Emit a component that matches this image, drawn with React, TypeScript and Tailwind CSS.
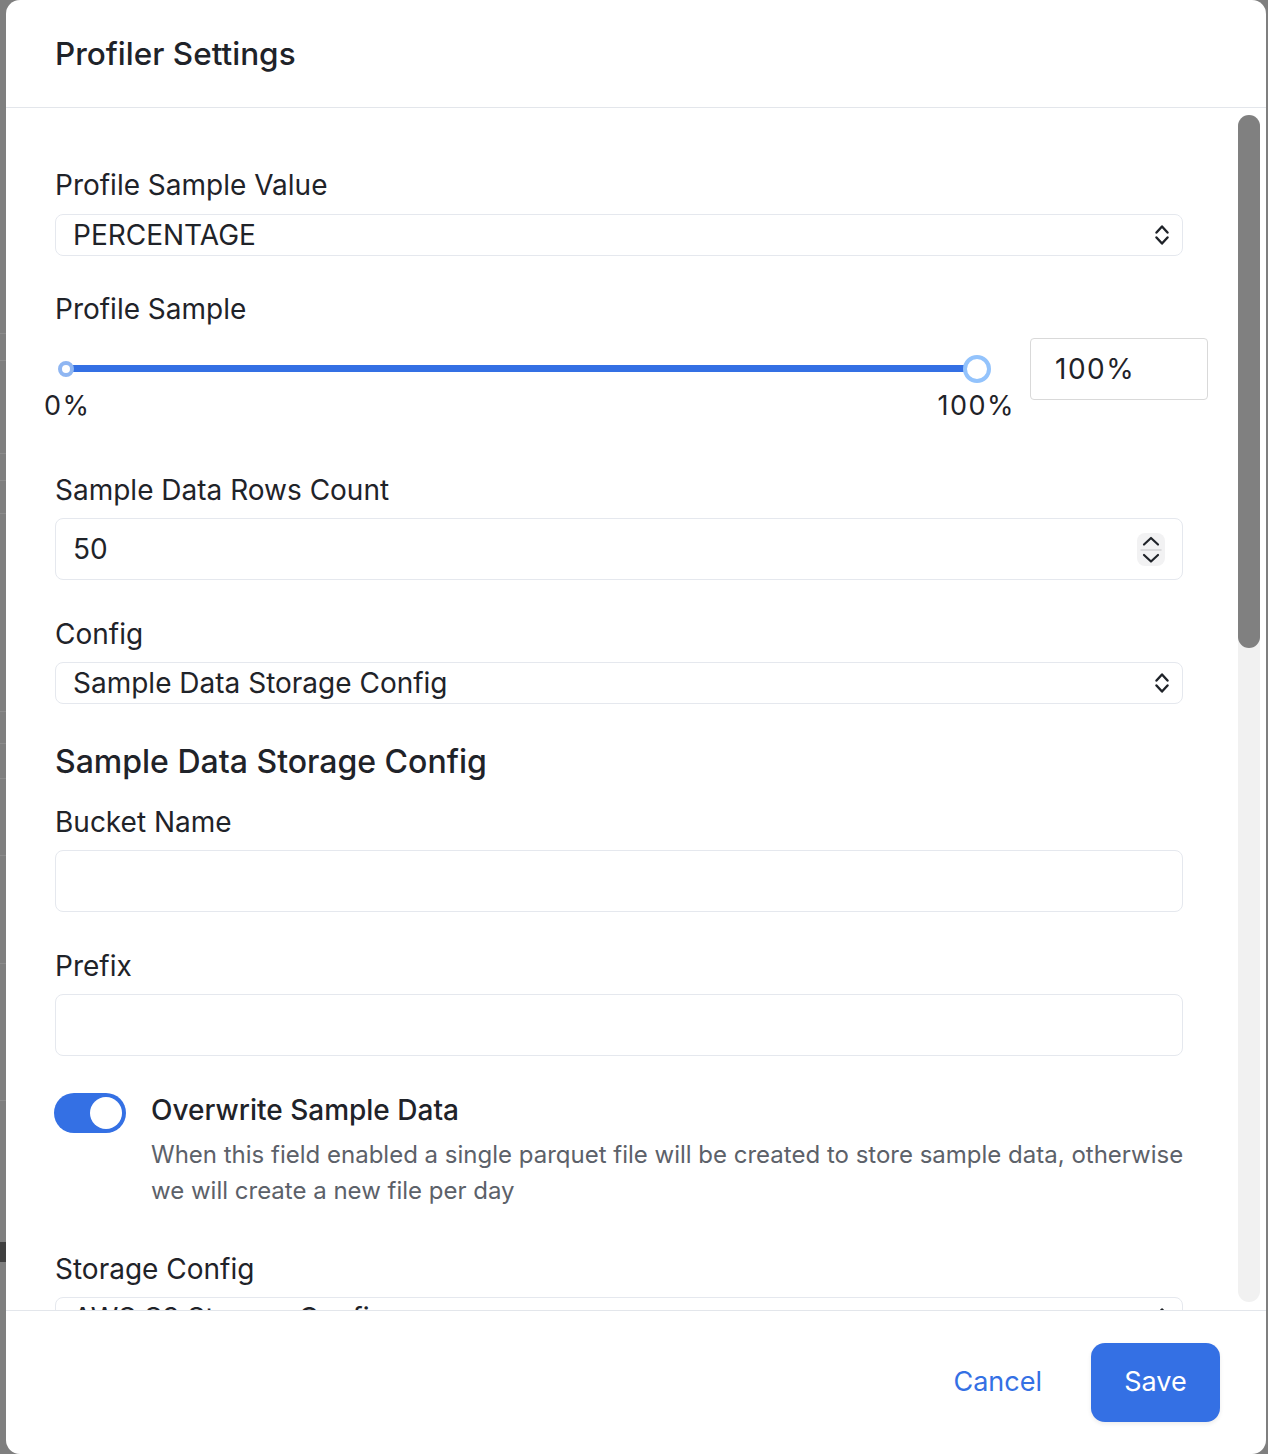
import React from "react";

const TEXT = "text-[#1f2329]";

function Chevrons() {
  return (
    <svg width="14" height="22" viewBox="0 0 14 22" fill="none" stroke="#1f2329" strokeWidth="2.4" strokeLinecap="round" strokeLinejoin="round">
      <polyline points="1.5,8.5 7,2.5 12.5,8.5" />
      <polyline points="1.5,13.5 7,19.5 12.5,13.5" />
    </svg>
  );
}

function Spinner() {
  return (
    <div className="w-[28px] h-[33px] rounded-[8px] bg-[#f2f2f3]">
      <svg width="28" height="33" viewBox="0 0 28 33" fill="none" strokeLinecap="round" strokeLinejoin="round">
        <polyline points="7,11.5 14,5 21,11.5" stroke="#1f2329" strokeWidth="2.2" />
        <line x1="4" y1="17" x2="24" y2="17" stroke="#d4d4d6" strokeWidth="1.5" />
        <polyline points="7,22 14,28.5 21,22" stroke="#1f2329" strokeWidth="2.2" />
      </svg>
    </div>
  );
}

function Label({ children, className = "" }: { children: React.ReactNode; className?: string }) {
  return <div className={`text-[28px] leading-[36px] ${TEXT} ${className}`}>{children}</div>;
}

function Select({ value, className = "" }: { value: string; className?: string }) {
  return (
    <div className={`h-[42px] w-full border border-[#e5e8ee] rounded-[8px] flex items-center justify-between pl-[17px] pr-[13px] text-[28px] ${TEXT} ${className}`}>
      <span className="leading-[36px] whitespace-nowrap">{value}</span>
      <Chevrons />
    </div>
  );
}

function Input({ className = "", children }: { className?: string; children?: React.ReactNode }) {
  return (
    <div className={`h-[62px] w-full border border-[#e5e8ee] rounded-[8px] flex items-center justify-between pl-[17px] pr-[17px] text-[28px] ${TEXT} ${className}`}>
      {children}
    </div>
  );
}

export default function App() {
  return (
    <div className="relative w-[1268px] h-[1454px] bg-[#7f7f7f] overflow-hidden font-[Inter,sans-serif]">
      {/* backdrop page (visible strip at the left edge) */}
      <div className="w-[6px] flex flex-col">
        <div className="h-[333px]" />
        <div className="h-[1px] bg-[#8c8c8c]" />
        <div className="h-[26px]" />
        <div className="h-[1px] bg-[#8c8c8c]" />
        <div className="h-[92px]" />
        <div className="h-[1px] bg-[#8c8c8c]" />
        <div className="h-[26px]" />
        <div className="h-[1px] bg-[#8c8c8c]" />
        <div className="h-[32px]" />
        <div className="h-[1px] bg-[#8c8c8c]" />
        <div className="h-[197px]" />
        <div className="h-[1px] bg-[#8c8c8c]" />
        <div className="h-[31px]" />
        <div className="h-[1px] bg-[#8c8c8c]" />
        <div className="h-[34px]" />
        <div className="h-[1px] bg-[#8c8c8c]" />
        <div className="h-[76px]" />
        <div className="h-[1px] bg-[#8c8c8c]" />
        <div className="h-[107px]" />
        <div className="h-[1px] bg-[#8c8c8c]" />
        <div className="h-[136px]" />
        <div className="h-[1px] bg-[#8c8c8c]" />
        <div className="h-[141px]" />
        <div className="h-[20px] bg-[#404040]" />
      </div>

      {/* modal */}
      <div className="absolute left-[6px] top-0 w-[1260px] h-[1454px] bg-white rounded-[14px] flex flex-col overflow-hidden">
        {/* header */}
        <div className="h-[108px] shrink-0 border-b border-[#e3e6eb] flex items-center px-[49px] pt-[1px]">
          <h1 className={`text-[31.5px] leading-[40px] font-medium ${TEXT}`}>Profiler Settings</h1>
        </div>

        {/* body */}
        <div className="flex-1 min-h-0 flex overflow-hidden">
          <div className="ml-[49px] w-[1128px] shrink-0 pt-[59px]">
            <Label>Profile Sample Value</Label>
            <Select value="PERCENTAGE" className="mt-[11px]" />

            <Label className="mt-[35px]">Profile Sample</Label>
            <div className="mt-[11px] flex items-start">
              <div className="ml-[11px] w-[911px] shrink-0 flex flex-col">
                <div className="relative h-[62px]">
                  <div className="absolute left-0 right-0 top-[27px] h-[7px] rounded-full bg-[#3470e4]" />
                  <div className="absolute left-[-8px] top-[23px] w-[16px] h-[16px] rounded-full border-[4px] border-[#8fb6f2] bg-white" />
                  <div className="absolute right-[-14px] top-[17px] w-[28px] h-[28px] rounded-full border-[4px] border-[#93c3fc] bg-white" />
                </div>
                <div className={`-mt-[12px] -ml-[22px] -mr-[38px] flex justify-between text-[27px] leading-[36px] tracking-[1.5px] ${TEXT}`}>
                  <span>0%</span>
                  <span>100%</span>
                </div>
              </div>
              <div className={`ml-[53px] w-[178px] h-[62px] shrink-0 border border-[#d9d9d9] rounded-[4px] flex items-center pl-[24px] text-[28px] tracking-[1.5px] ${TEXT}`}>
                100%
              </div>
            </div>

            <Label className="mt-[48px]">Sample Data Rows Count</Label>
            <Input className="mt-[10px]">
              <span>50</span>
              <Spinner />
            </Input>

            <Label className="mt-[36px]">Config</Label>
            <Select value="Sample Data Storage Config" className="mt-[10px]" />

            <h2 className={`mt-[38px] text-[32px] leading-[40px] font-medium ${TEXT}`}>Sample Data Storage Config</h2>

            <Label className="mt-[22px]">Bucket Name</Label>
            <Input className="mt-[10px]" />

            <Label className="mt-[36px]">Prefix</Label>
            <Input className="mt-[10px]" />

            <div className="mt-[37px] flex items-start gap-[25px]">
              <div className="w-[72px] h-[40px] shrink-0 rounded-full bg-[#3470e4] ml-[-1px] flex items-center justify-end pr-[4px]">
                <div className="w-[32px] h-[32px] rounded-full bg-white" />
              </div>
              <div className="mt-[-1px]">
                <div className={`text-[28px] leading-[36px] font-medium ${TEXT}`}>Overwrite Sample Data</div>
                <div className="mt-[9px] text-[24px] leading-[36px] text-[#5c6169] whitespace-nowrap">
                  <div>When this field enabled a single parquet file will be created to store sample data, otherwise</div>
                  <div>we will create a new file per day</div>
                </div>
              </div>
            </div>

            <Label className="mt-[42px]">Storage Config</Label>
            <Select value="AWS S3 Storage Config" className="mt-[10px]" />
          </div>

          {/* scrollbar */}
          <div className="ml-auto mr-[6px] mt-[7px] mb-[8px] w-[22px] shrink-0 rounded-full bg-[#f1f1f1]">
            <div className="h-[533px] w-full rounded-full bg-[#808080]" />
          </div>
        </div>

        {/* footer */}
        <div className="h-[144px] shrink-0 border-t border-[#e3e6eb] flex justify-end items-start pt-[32px] pr-[46px]">
          <button className="h-[79px] px-[33px] text-[27px] text-[#3470e4] bg-transparent">Cancel</button>
          <button className="ml-[16px] h-[79px] w-[129px] rounded-[14px] bg-[#3470e4] text-white text-[27px] shadow-[0_2px_4px_rgba(0,0,0,0.08)]">Save</button>
        </div>
      </div>
    </div>
  );
}
